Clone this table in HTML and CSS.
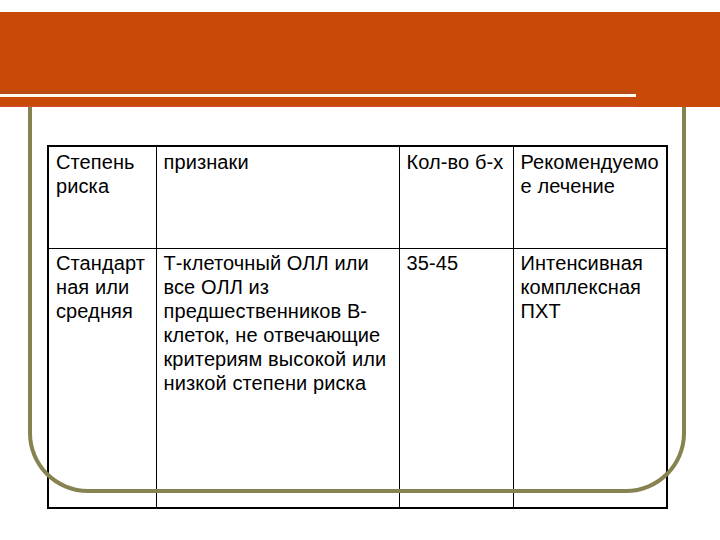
FILE: index.html
```html
<!DOCTYPE html>
<html lang="ru">
<head>
<meta charset="utf-8">
<title>Степень риска</title>
<link rel="stylesheet" href="styles.css">
</head>
<body>
<div class="slide">
  <div class="header">
    <div class="header-left">
      <div class="band-main"></div>
      <div class="band-dark"></div>
      <div class="band-line"></div>
      <div class="band-low"></div>
    </div>
    <div class="header-right"></div>
  </div>
  <div class="frame"></div>
  <table class="risk">
    <colgroup>
      <col class="c1"><col class="c2"><col class="c3"><col class="c4">
    </colgroup>
    <tr class="r1">
      <td>Степень риска</td>
      <td>признаки</td>
      <td>Кол-во б-х</td>
      <td>Рекомендуемо е лечение</td>
    </tr>
    <tr class="r2">
      <td>Стандарт ная или средняя</td>
      <td>Т-клеточный ОЛЛ или все ОЛЛ из предшественников В-клеток, не отвечающие критериям высокой или низкой степени риска</td>
      <td>35-45</td>
      <td>Интенсивная комплексная ПХТ</td>
    </tr>
  </table>
</div>
</body>
</html>
```
FILE: styles.css
```css
html, body {
  margin: 0;
  padding: 0;
  background: #ffffff;
}
.slide {
  position: relative;
  width: 720px;
  height: 540px;
  overflow: hidden;
  font-family: "Liberation Sans", Arial, sans-serif;
  color: #000;
}
.header {
  display: flex;
  margin-top: 12px;
}
.header-left {
  width: 636px;
  display: flex;
  flex-direction: column;
}
.band-main {
  height: 79px;
  background: #c94a08;
}
.band-dark {
  height: 3px;
  background: #b84c14;
}
.band-line {
  height: 3px;
  background: #fffaf0;
}
.band-low {
  height: 9px;
  background: #c94a08;
  border-bottom: 1px solid #d2483a;
}
.header-right {
  flex: 1;
  height: 95px;
  background: #c94a08;
}
.frame {
  position: absolute;
  left: 28px;
  top: 107px;
  width: 650px;
  height: 382px;
  border: 4px solid #868350;
  border-top: none;
  border-radius: 0 0 60px 60px;
  pointer-events: none;
}
.risk {
  margin: 38px 0 0 47px;
  width: 619px;
  border-collapse: collapse;
  table-layout: fixed;
  border: 2px solid #000;
  font-size: 20px;
  line-height: 24px;
  letter-spacing: 0.1px;
}
.c1 { width: 108px; }
.c2 { width: 243px; }
.c3 { width: 114px; }
.c4 { width: 154px; }
.risk td {
  border: 1px solid #000;
  vertical-align: top;
  padding: 3px 2px 0 7px;
}
.r1 td { height: 98px; }
.r2 td { height: 256px; padding-top: 2px; }
```
